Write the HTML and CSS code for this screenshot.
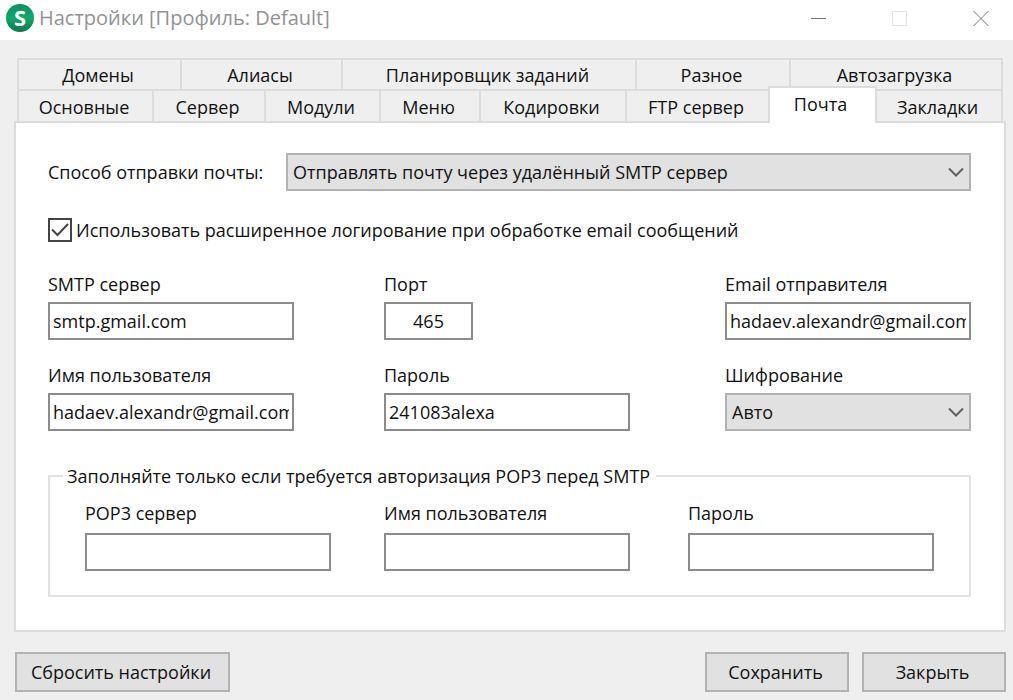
FILE: index.html
```html
<!DOCTYPE html>
<html lang="ru">
<head>
<meta charset="utf-8">
<meta name="viewport" content="width=device-width, initial-scale=1">
<title>Настройки [Профиль: Default]</title>
<link rel="stylesheet" href="styles.css">
</head>
<body>
<div class="window">
  <header class="titlebar">
    <svg class="logo" viewBox="0 0 28 28" aria-hidden="true">
      <defs>
        <linearGradient id="logo-fill" x1="0" y1="0" x2="0" y2="1">
          <stop offset="0" stop-color="#08905f"/>
          <stop offset="0.5" stop-color="#0fa96a"/>
          <stop offset="1" stop-color="#087a4b"/>
        </linearGradient>
      </defs>
      <circle cx="14" cy="14" r="14" fill="url(#logo-fill)"/>
      <text class="logo-letter" x="14" y="22" text-anchor="middle">S</text>
    </svg>
    <h1 class="title">Настройки [Профиль: Default]</h1>
    <div class="window-controls">
      <button class="window-control" type="button" aria-label="Свернуть">
        <svg viewBox="0 0 16 16" class="control-icon"><path d="M0 8.5H15"/></svg>
      </button>
      <button class="window-control" type="button" aria-label="Развернуть" disabled>
        <svg viewBox="0 0 16 16" class="control-icon"><path d="M.5 1.5H14.5V15.5H.5Z"/></svg>
      </button>
      <button class="window-control" type="button" aria-label="Закрыть окно">
        <svg viewBox="0 0 16 16" class="control-icon"><path d="M.5 1L15.500 16M15.500 1L.5 16"/></svg>
      </button>
    </div>
  </header>

  <main class="content">
    <div class="tabs" role="tablist">
      <div class="tab-row tab-row-back">
        <button class="tab" type="button" role="tab">Домены</button>
        <button class="tab" type="button" role="tab">Алиасы</button>
        <button class="tab" type="button" role="tab">Планировщик заданий</button>
        <button class="tab" type="button" role="tab">Разное</button>
        <button class="tab" type="button" role="tab">Автозагрузка</button>
      </div>
      <div class="tab-row tab-row-front">
        <button class="tab" type="button" role="tab">Основные</button>
        <button class="tab" type="button" role="tab">Сервер</button>
        <button class="tab" type="button" role="tab">Модули</button>
        <button class="tab" type="button" role="tab">Меню</button>
        <button class="tab" type="button" role="tab">Кодировки</button>
        <button class="tab" type="button" role="tab">FTP сервер</button>
        <button class="tab tab-active" type="button" role="tab" aria-selected="true">Почта</button>
        <button class="tab" type="button" role="tab">Закладки</button>
      </div>
    </div>

    <form class="panel" id="mail-form">
      <div class="method">
        <label class="method-label" for="method">Способ отправки почты:</label>
        <div class="select-wrap">
          <select class="control select" id="method"><option>Отправлять почту через удалённый SMTP сервер</option></select>
          <svg class="chevron" viewBox="0 0 16 10" aria-hidden="true"><path d="M1 1.500L8 8.500L15 1.500"/></svg>
        </div>
      </div>

      <div class="check">
        <input class="checkbox" type="checkbox" id="logging" checked>
        <label for="logging">Использовать расширенное логирование при обработке email сообщений</label>
      </div>

      <div class="fields">
        <div class="field">
          <label for="smtp">SMTP сервер</label>
          <input class="control" id="smtp" type="text" value="smtp.gmail.com">
        </div>
        <div class="field">
          <label for="port">Порт</label>
          <input class="control control-port" id="port" type="text" value="465">
        </div>
        <div class="field">
          <label for="sender">Email отправителя</label>
          <input class="control" id="sender" type="text" value="hadaev.alexandr@gmail.com">
        </div>
        <div class="field">
          <label for="user">Имя пользователя</label>
          <input class="control" id="user" type="text" value="hadaev.alexandr@gmail.com">
        </div>
        <div class="field">
          <label for="password">Пароль</label>
          <input class="control" id="password" type="text" value="241083alexa">
        </div>
        <div class="field">
          <label for="encryption">Шифрование</label>
          <div class="select-wrap">
            <select class="control select" id="encryption"><option>Авто</option></select>
            <svg class="chevron" viewBox="0 0 16 10" aria-hidden="true"><path d="M1 1.500L8 8.500L15 1.500"/></svg>
          </div>
        </div>
      </div>

      <fieldset class="group">
        <legend>Заполняйте только если требуется авторизация POP3 перед SMTP</legend>
        <div class="group-fields">
          <div class="field">
            <label for="pop">POP3 сервер</label>
            <input class="control" id="pop" type="text">
          </div>
          <div class="field">
            <label for="pop-user">Имя пользователя</label>
            <input class="control" id="pop-user" type="text">
          </div>
          <div class="field">
            <label for="pop-password">Пароль</label>
            <input class="control" id="pop-password" type="text">
          </div>
        </div>
      </fieldset>
    </form>
  </main>

  <footer class="actions">
    <button class="button button-reset" type="reset" form="mail-form">Сбросить настройки</button>
    <button class="button" type="submit" form="mail-form">Сохранить</button>
    <button class="button" type="button">Закрыть</button>
  </footer>
</div>
</body>
</html>
```
FILE: styles.css
```css
* {
  box-sizing: border-box;
}

body {
  margin: 0;
  background: #efefef;
  color: #111;
  font: 18px/24px "Open Sans", "Noto Sans", sans-serif;
}

button,
input,
select {
  margin: 0;
  border-radius: 0;
  color: inherit;
  font: inherit;
}

.window {
  min-height: 100vh;
}

.titlebar {
  display: flex;
  align-items: center;
  height: 40px;
  padding: 0 16px 4px 6px;
  background: #fff;
}

.logo {
  width: 28px;
  height: 28px;
  overflow: visible;
}

.logo-letter {
  fill: #fff;
  font: bold 22px "Open Sans", sans-serif;
}

.title {
  margin: 0 auto 0 5px;
  color: #929292;
  font-size: 20px;
  font-weight: 400;
}

.window-controls {
  display: flex;
  gap: 49px;
}

.window-control {
  display: flex;
  padding: 8px;
  border: 0;
  background: none;
  color: #777;
}

.window-control:disabled {
  color: #e2e2e2;
}

.control-icon {
  width: 16px;
  height: 16px;
  overflow: visible;
  fill: none;
  stroke: currentColor;
}

.content {
  padding: 18px 7px 0 14px;
}

.tabs {
  padding: 0 3px;
}

.tab-row {
  display: grid;
  border-right: 2px solid #dcdcdc;
}

.tab-row-back {
  grid-template-columns: 163fr 161fr 294fr 154fr 212fr;
}

.tab-row-front {
  grid-template-columns: 135fr 112fr 115fr 100fr 146fr 143fr 109fr 124fr;
}

.tab {
  min-width: 0;
  height: 31px;
  padding: 1px 3px 0 0;
  border: 2px solid #dcdcdc;
  border-width: 2px 0 0 2px;
  background: #efefef;
  line-height: 24px;
  white-space: nowrap;
}

.tab-row-front .tab {
  height: 32px;
}

.tab-row-front .tab-active {
  z-index: 1;
  height: 37px;
  padding: 0 4px 4px 0;
  margin: -3px 0 -2px;
  border-right-width: 2px;
  background: #fff;
}

.tab-active + .tab {
  border-left: 0;
}

.panel {
  padding: 30px 33px 33px 32px;
  border: 2px solid #dcdcdc;
  background: #fff;
}

.method {
  display: flex;
  align-items: center;
}

.method-label {
  flex: 0 0 238px;
}

.select-wrap {
  position: relative;
  flex: 1;
}

.control {
  display: block;
  width: 100%;
  height: 38px;
  padding: 0 3px;
  border: 2px solid #8c8c8c;
  background: #fff;
}

.select {
  padding: 0 36px 0 5px;
  border-color: #b2b2b2;
  background: #e1e1e1;
  appearance: none;
}

.chevron {
  position: absolute;
  top: 14px;
  right: 7px;
  width: 16px;
  height: 10px;
  fill: none;
  stroke: #606060;
  stroke-width: 2;
  pointer-events: none;
}

.check {
  display: flex;
  align-items: center;
  gap: 4px;
  margin: 27px 0 30px;
}

.checkbox {
  width: 24px;
  height: 24px;
  border: 2px solid #444;
  background: #fff;
  appearance: none;
}

.checkbox:checked {
  background: #fff url("data:image/svg+xml,%3Csvg xmlns='http://www.w3.org/2000/svg' viewBox='0 0 20 20'%3E%3Cpath d='M2 9.500L7.500 15L18 4' fill='none' stroke='%23444' stroke-width='2'/%3E%3C/svg%3E") center / 20px;
}

.fields,
.group-fields {
  display: grid;
  row-gap: 23px;
}

.fields {
  grid-template-columns: 336fr 341fr 246px;
}

.group-fields {
  grid-template-columns: 299fr 304fr 246px;
}

.field {
  display: grid;
  gap: 6px;
  width: 246px;
}

.control-port {
  width: 89px;
  text-align: center;
}

.group {
  min-width: 0;
  padding: 13px 35px 24px;
  margin: 33px 0 0;
  border: 2px solid #e1e1e1;
}

.group legend {
  padding: 0 6px 0 4px;
  margin-left: -22px;
}

.group .field {
  gap: 8px;
}

.actions {
  display: flex;
  gap: 13px;
  padding: 20px 7px 9px 15px;
}

.button {
  width: 144px;
  height: 40px;
  padding: 0 3px 0 0;
  border: 2px solid #b2b2b2;
  background: #e1e1e1;
}

.button-reset {
  width: 215px;
  margin-right: auto;
}
```
